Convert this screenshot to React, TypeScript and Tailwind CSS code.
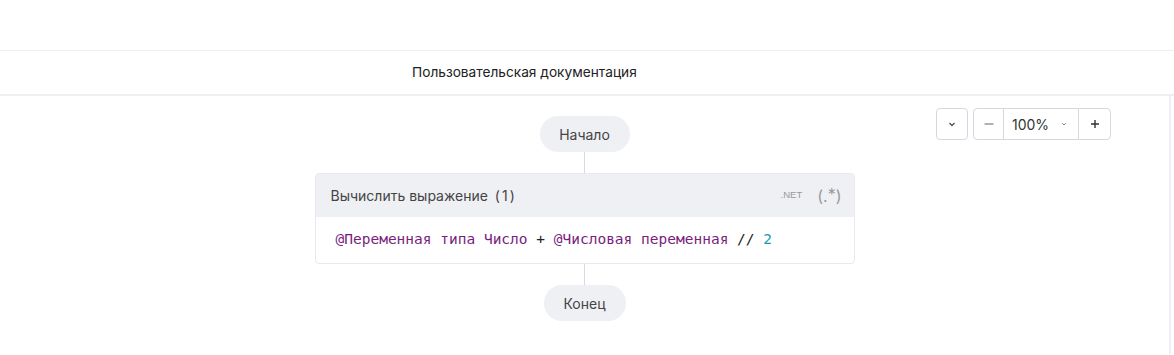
import React from 'react';

const font = { fontFamily: 'Inter, "Noto Sans", sans-serif' };

const Connector: React.FC<{ h: string }> = ({ h }) => <div className={`w-px bg-[#d7d9e0] ${h}`} />;

const ZoomControls: React.FC = () => (
  <div className="absolute right-[58px] top-[12px] flex items-center gap-[5px]">
    <button className="flex h-[32px] w-[32px] items-center justify-center rounded-[4px] border border-[#d5d8df] bg-white text-[#555]">
      <svg width="10" height="10" viewBox="0 0 10 10" fill="none" stroke="currentColor" strokeWidth="1.4">
        <path d="M2.5 4 L5 6.5 L7.5 4" />
      </svg>
    </button>
    <div className="flex h-[32px] rounded-[4px] border border-[#d5d8df] bg-white">
      <button className="flex w-[30px] items-center justify-center border-r border-[#d5d8df] text-[#888]">
        <svg width="12" height="12" viewBox="0 0 12 12" stroke="currentColor" strokeWidth="1.3">
          <path d="M1.5 6 H10.5" />
        </svg>
      </button>
      <div className="flex w-[75px] items-center justify-between border-r border-[#d5d8df] pl-[8px] pr-[10px] text-[14px] text-[#333]">
        <span>100%</span>
        <svg width="8" height="8" viewBox="0 0 8 8" fill="none" stroke="#888" strokeWidth="1">
          <path d="M2.2 3.2 L4 5 L5.8 3.2" />
        </svg>
      </div>
      <button className="flex w-[31px] items-center justify-center text-[#333]">
        <svg width="12" height="12" viewBox="0 0 12 12" stroke="currentColor" strokeWidth="1.4">
          <path d="M2 6 H10 M6 2 V10" />
        </svg>
      </button>
    </div>
  </div>
);

export default function App() {
  return (
    <div className="h-[355px] w-[1174px] overflow-hidden bg-white" style={font}>
      <div className="h-[51px] border-b border-[#eeeff2]" />
      <div className="flex h-[45px] items-center border-b-2 border-[#eeeff3]">
        <span className="ml-[412px] text-[13.7px] text-[#222]">Пользовательская документация</span>
      </div>
      <div className="flex">
        <div className="relative flex h-[258px] w-[1171px] flex-col items-center border-r-2 border-[#eeeff3] pt-[20px]">
          <ZoomControls />
          <div className="flex h-[36px] w-[90px] items-center justify-center rounded-full bg-[#eff0f4] text-[14px] text-[#444]">
            Начало
          </div>
          <Connector h="h-[21px]" />
          <div className="w-[540px] overflow-hidden rounded-[4px] border border-[#e8e9ee] bg-white">
            <div className="flex h-[43px] items-center justify-between bg-[#eff0f4] pl-[15px] pr-[12px]">
              <span className="text-[14px] text-[#444]">
                Вычислить выражение<span className="ml-[7px] tracking-[2px]">(1)</span>
              </span>
              <div className="flex items-center gap-[15px] text-[#999]">
                <span className="text-[9.5px]" style={{ fontFamily: '"Liberation Sans", Arial, sans-serif' }}>.NET</span>
                <span className="text-[16px]">
                  (.<span className="relative -top-[2px]">*</span>)
                </span>
              </div>
            </div>
            <div className="flex h-[46px] items-center pl-[20px] text-[14.5px]" style={{ fontFamily: '"DejaVu Sans Mono", monospace' }}>
              <span className="text-[#7a1e7d]">@Переменная типа Число</span>
              <span className="text-[#222]">&nbsp;+&nbsp;</span>
              <span className="text-[#7a1e7d]">@Числовая переменная</span>
              <span className="text-[#222]">&nbsp;//&nbsp;</span>
              <span className="text-[#1b9ab0]">2</span>
            </div>
          </div>
          <Connector h="h-[21px]" />
          <div className="flex h-[36px] w-[82px] items-center justify-center rounded-full bg-[#eff0f4] text-[14px] text-[#444]">
            Конец
          </div>
        </div>
      </div>
    </div>
  );
}
